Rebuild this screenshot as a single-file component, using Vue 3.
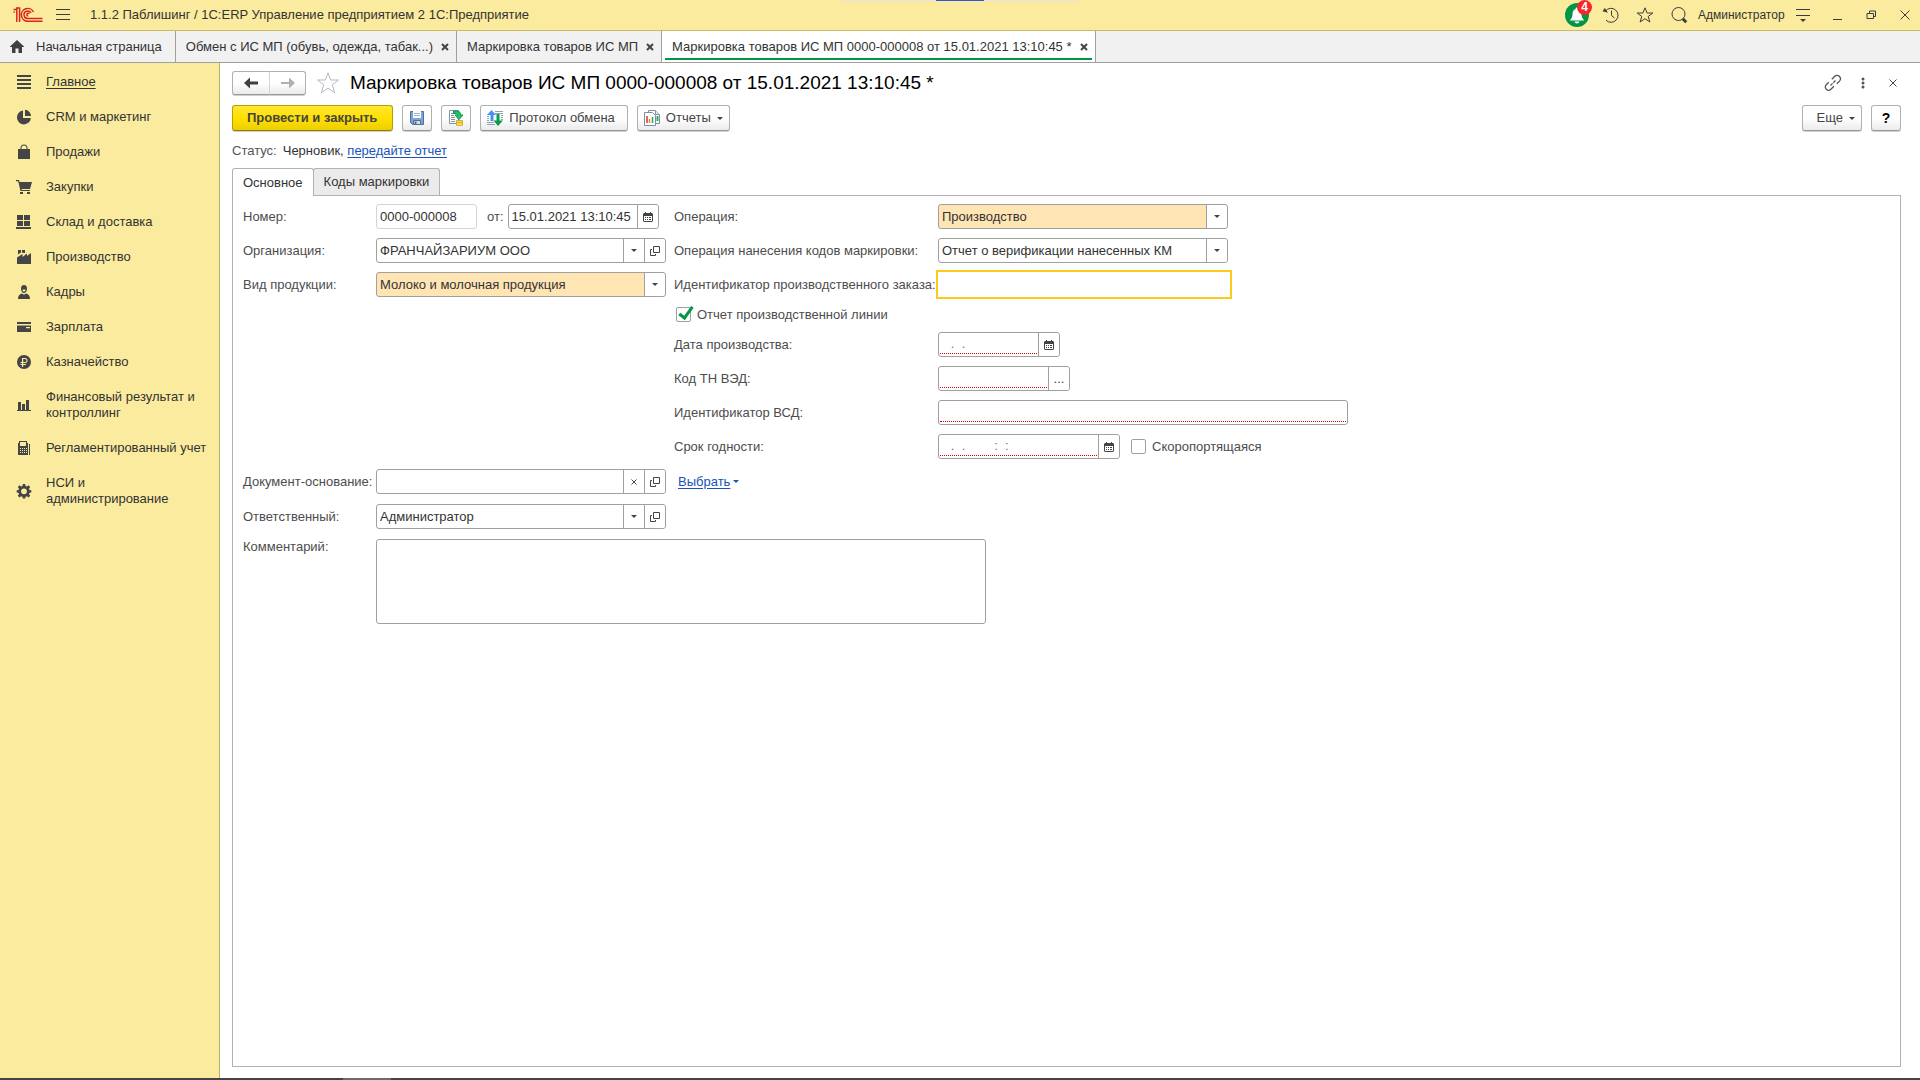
<template>
  <div class="app">
    <header class="topbar">
      <svg class="logo" viewBox="0 0 30 16" width="30" height="16" aria-label="1С">
        <g fill="none" stroke="#d9261c" stroke-width="1.5">
          <path d="M0.5 2.500H3.800V15M0.500 5H1.800M6.600 15V1H3" />
          <path d="M20.500 5A6.400 6.400 0 1 0 15 14.200H29.500" />
          <path d="M18 6A3.700 3.700 0 1 0 15 11.400H29.500" />
          <path d="M16.400 6.800A1.400 1.400 0 1 0 15.200 9" />
        </g>
      </svg>
      <button class="top-btn burger" aria-label="Меню">
        <svg viewBox="0 0 16 16" width="16" height="16"><path d="M1 2.500h14M1 7.500h14M1 12.500h14" /></svg>
      </button>
      <div class="app-title">1.1.2 Паблишинг / 1С:ERP Управление предприятием 2 1С:Предприятие</div>

      <div class="top-actions">
        <button class="top-btn bell" aria-label="Уведомления">
          <svg viewBox="0 0 24 24" width="24" height="24">
            <circle cx="12" cy="12" r="12" fill="#009646" stroke="none" />
            <path class="bell-body" d="M12 4.500c-1 0-1.500.7-1.500 1.500C8 7 7.600 9 7.500 11.500 7.400 14 6.500 15.500 4.800 17.500h14.400c-1.700-2-2.600-3.500-2.700-6C16.400 9 16 7 13.500 6c0-.8-.5-1.500-1.500-1.500zM9.500 18.500h5c-.5 1.300-1.300 2-2.500 2s-2-.7-2.500-2z" />
          </svg>
          <span class="badge">4</span>
        </button>
        <button class="top-btn" aria-label="История">
          <svg viewBox="0 0 18 18" width="18" height="18">
            <path d="M3.500 5A7 7 0 1 1 4 14.200M9.500 4.500V9.500l3 2.500" />
            <path class="solid" d="M0.500 5.200 6 6.800 2.800 2z" />
          </svg>
        </button>
        <button class="top-btn" aria-label="Избранное">
          <svg viewBox="0 0 18 18" width="18" height="18">
            <path d="M9 1.800 11.100 7H16.800L12.200 10.500 13.900 16 9 12.700 4.100 16 5.800 10.500 1.200 7H6.900z" />
          </svg>
        </button>
        <button class="top-btn" aria-label="Поиск">
          <svg viewBox="0 0 18 18" width="18" height="18">
            <circle cx="8.500" cy="8" r="6.500" />
            <path class="thick" d="m12.800 12.800 3.400 3.400" />
          </svg>
        </button>
        <div class="user">Администратор</div>
        <button class="top-btn" aria-label="Настройки">
          <svg viewBox="0 0 16 16" width="16" height="16">
            <path d="M1 2.500h14M1 8.500h14" />
            <path class="solid" d="M5 12h6l-3 3z" />
          </svg>
        </button>
        <button class="top-btn" aria-label="Свернуть">
          <svg viewBox="0 0 16 16" width="16" height="16"><path d="M4 12.500h9" /></svg>
        </button>
        <button class="top-btn" aria-label="Восстановить">
          <svg viewBox="0 0 16 16" width="16" height="16"><path d="M4 6.500h6.500v5H4zM6.500 6V4h6v5.500H11" /></svg>
        </button>
        <button class="top-btn" aria-label="Закрыть">
          <svg viewBox="0 0 16 16" width="16" height="16"><path d="m3.500 3.500 9 9M12.500 3.500l-9 9" /></svg>
        </button>
      </div>
      <div class="grip"><span></span></div>
    </header>

    <nav class="windows">
      <button class="window home">
        <svg viewBox="0 0 14 13" width="14" height="13"><path d="M7 0 14 6.500V7H12v6H8.500V8.500h-3V13H2V7H0v-.5z" /></svg>
        <span>Начальная страница</span>
      </button>
      <div v-for="tab in windows" :key="tab.title" class="window" :class="{ active: tab.active }">
        <button class="window-title">{{ tab.title }}</button>
        <button class="window-close" aria-label="Закрыть вкладку">
          <svg viewBox="0 0 8 8" width="8" height="8"><path d="m1 1 6 6M7 1 1 7" /></svg>
        </button>
      </div>
    </nav>

    <div class="body">
      <aside class="sidebar">
        <a v-for="item in sections" :key="item.title" href="#" class="section" :class="{ current: item.current }">
          <svg viewBox="0 0 16 16" width="16" height="16"><path fill-rule="evenodd" :d="item.icon" /></svg>
          <span>{{ item.title }}</span>
        </a>
      </aside>

      <main class="main">
        <div class="head">
          <div class="history">
            <button class="btn" aria-label="Назад">
              <svg viewBox="0 0 14 12" width="14" height="12"><path fill="#404040" d="M0 6 6 .5V4.500h8v3H6v4z" /></svg>
            </button>
            <button class="btn" aria-label="Вперед">
              <svg viewBox="0 0 14 12" width="14" height="12"><path fill="#b0b0b0" d="M14 6 8 .5V5H0v2h8v4.500z" /></svg>
            </button>
          </div>
          <button class="plain star" aria-label="В избранное">
            <svg viewBox="0 0 24 24" width="24" height="24">
              <path fill="none" stroke="#b4b9c2" d="M12 1.800 14.700 9H22.500L16.300 13.700 18.600 21.800 12 17 5.400 21.800 7.700 13.700 1.500 9H9.300z" />
            </svg>
          </button>
          <h1>Маркировка товаров ИС МП 0000-000008 от 15.01.2021 13:10:45 *</h1>
          <div class="head-tools">
            <button class="plain" aria-label="Получить ссылку">
              <svg viewBox="0 0 18 18" width="18" height="18">
                <g fill="none" stroke="#555" stroke-width="1.300">
                  <path d="M7.800 5.200 10.500 2.500a3.200 3.200 0 0 1 5 0c1.300 1.500 1.200 3.300 0 4.600L12.800 9.800" />
                  <path d="M4.800 8.200 2.300 10.700a3.200 3.200 0 0 0 0 4.600c1.500 1.300 3.300 1.300 4.600 0l3-3" />
                  <path d="m6.500 11.500 5-5" stroke-dasharray="3 1" />
                </g>
              </svg>
            </button>
            <button class="plain" aria-label="Дополнительно">
              <svg viewBox="0 0 4 12" width="4" height="12" fill="#555"><circle cx="2" cy="2" r="1.500" /><circle cx="2" cy="6" r="1.500" /><circle cx="2" cy="10" r="1.500" /></svg>
            </button>
            <button class="plain" aria-label="Закрыть форму">
              <svg viewBox="0 0 8 8" width="8" height="8"><path stroke="#444" d="m.5.5 7 7M7.500.5l-7 7" /></svg>
            </button>
          </div>
        </div>

        <div class="toolbar">
          <button class="btn primary">Провести и закрыть</button>
          <button class="btn icon-only" aria-label="Записать">
            <svg viewBox="0 0 16 16" width="16" height="16">
              <path fill="#7ba5d6" stroke="#4a719f" d="M1.500 1.500h13v13h-11l-2-2z" />
              <path fill="#fff" d="M4 1h8v7H4z" />
              <path stroke="#9fb4cc" d="M5 3.500h6M5 5.500h6" />
              <path fill="#d7dde4" stroke="#54708f" d="M4.500 10.500h7v4h-7z" />
              <path fill="#4a719f" d="M5.500 11.500h2v3h-2z" />
            </svg>
          </button>
          <button class="btn icon-only" aria-label="Провести">
            <svg viewBox="0 0 16 16" width="16" height="16">
              <path fill="#fff" stroke="#8192a3" d="M1.500.5h9v13h-9z" />
              <path stroke="#8192a3" d="M3 3.500h3M3 5.500h3M3 7.500h4M3 9.500h4M3 11.500h4" />
              <path fill="#1fc46a" stroke="#0b9a4a" d="M5.500 1h3.500c2.500 0 3.500 1.500 3.500 4h2.500L11 9.500 7 5h2.500C9.500 4 9 3.500 8 3.500H5.500z" />
              <path fill="#f9dd66" stroke="#d9a927" d="M8.500 10.500h6v4.800h-6z" />
              <path stroke="#d9a927" d="M8.500 12.500h6" />
            </svg>
          </button>
          <button class="btn">
            <svg viewBox="0 0 16 16" width="16" height="16">
              <path stroke="#8fa3b5" d="M0 6.500h2M0 8.500h2M0 10.500h2M0 12.500h7M0 14.500h8M8 1.500h8M8 3.500h8M14 5.500h2M14 7.500h2M14 9.500h2" />
              <path fill="#4a90f0" d="M4.500 0 9 5H6.500v6h-3V5H0z" />
              <path fill="#0b9a4a" d="M9.500 4h3v6.500H16L11 16 6.500 10.500h3z" />
            </svg>
            Протокол обмена
          </button>
          <button class="btn">
            <svg viewBox="0 0 16 16" width="16" height="16">
              <path fill="#fff" stroke="#7c8fa3" d="M4.500.5h7l4 4v9h-11z" />
              <path fill="#e4e9ee" stroke="#7c8fa3" d="M11.500.5v4h4" />
              <path stroke="#2fa84f" stroke-width="2" d="M13.500 6v5" />
              <path fill="#fff" stroke="#7c8fa3" d="M.5 2.500h8l3 3v10H.5z" />
              <path stroke="#d8322a" stroke-width="1.500" d="M3 6v7" />
              <path stroke="#e08a2a" stroke-width="1.500" d="M5.500 9v4" />
              <path stroke="#2fa84f" stroke-width="1.500" d="M8.500 7v6" />
            </svg>
            Отчеты
            <i class="caret"></i>
          </button>
          <button class="btn more">Еще <i class="caret"></i></button>
          <button class="btn icon-only help">?</button>
        </div>

        <div class="status">
          <span class="muted">Статус:</span>
          <span>Черновик, <a href="#">передайте отчет</a></span>
        </div>

        <div class="tabs" role="tablist">
          <button class="tab active" role="tab" aria-selected="true">Основное</button>
          <button class="tab" role="tab" aria-selected="false">Коды маркировки</button>
        </div>

        <form class="panel" @submit.prevent>
          <div class="columns">
            <div class="col left">
              <div class="row">
                <label for="number">Номер:</label>
                <div class="field readonly number"><input id="number" v-model="doc.number" type="text" readonly></div>
                <label for="date" class="from">от:</label>
                <div class="field date-time">
                  <input id="date" v-model="doc.date" type="text">
                  <button type="button" class="cell" aria-label="Календарь"><svg viewBox="0 0 10 10" width="10" height="10"><path :d="icons.calendar" fill-rule="evenodd" /></svg></button>
                </div>
              </div>
              <div class="row">
                <label for="org">Организация:</label>
                <div class="field wide">
                  <input id="org" v-model="doc.org" type="text">
                  <button type="button" class="cell" aria-label="Выбрать"><i class="caret"></i></button>
                  <button type="button" class="cell" aria-label="Открыть"><svg viewBox="0 0 10 10" width="10" height="10"><path class="line" :d="icons.open" /></svg></button>
                </div>
              </div>
              <div class="row">
                <label for="kind">Вид продукции:</label>
                <div class="field wide marked">
                  <select id="kind" v-model="doc.kind"><option>Молоко и молочная продукция</option></select>
                  <span class="cell"><i class="caret"></i></span>
                </div>
              </div>
            </div>

            <div class="col right">
              <div class="row">
                <label for="operation">Операция:</label>
                <div class="field wide marked">
                  <select id="operation" v-model="doc.operation"><option>Производство</option></select>
                  <span class="cell"><i class="caret"></i></span>
                </div>
              </div>
              <div class="row">
                <label for="marking">Операция нанесения кодов маркировки:</label>
                <div class="field wide">
                  <select id="marking" v-model="doc.marking"><option>Отчет о верификации нанесенных КМ</option></select>
                  <span class="cell"><i class="caret"></i></span>
                </div>
              </div>
              <div class="row">
                <label for="order">Идентификатор производственного заказа:</label>
                <div class="field wide focused"><input id="order" v-model="doc.order" type="text"></div>
              </div>
              <label class="check">
                <input v-model="doc.lineReport" type="checkbox">
                Отчет производственной линии
              </label>
              <div class="row">
                <label for="made">Дата производства:</label>
                <div class="field required date">
                  <input id="made" v-model="doc.made" type="text">
                  <button type="button" class="cell" aria-label="Календарь"><svg viewBox="0 0 10 10" width="10" height="10"><path :d="icons.calendar" fill-rule="evenodd" /></svg></button>
                </div>
              </div>
              <div class="row">
                <label for="tnved">Код ТН ВЭД:</label>
                <div class="field required code">
                  <input id="tnved" v-model="doc.tnved" type="text">
                  <button type="button" class="cell">...</button>
                </div>
              </div>
              <div class="row">
                <label for="vsd">Идентификатор ВСД:</label>
                <div class="field required vsd"><input id="vsd" v-model="doc.vsd" type="text"></div>
              </div>
              <div class="row">
                <label for="expires">Срок годности:</label>
                <div class="field required expires">
                  <input id="expires" v-model="doc.expires" type="text">
                  <button type="button" class="cell" aria-label="Календарь"><svg viewBox="0 0 10 10" width="10" height="10"><path :d="icons.calendar" fill-rule="evenodd" /></svg></button>
                </div>
                <label class="check perishable">
                  <input v-model="doc.perishable" type="checkbox">
                  Скоропортящаяся
                </label>
              </div>
            </div>
          </div>

          <div class="col left bottom">
            <div class="row">
              <label for="base">Документ-основание:</label>
              <div class="field wide">
                <input id="base" v-model="doc.base" type="text">
                <button type="button" class="cell" aria-label="Очистить"><svg viewBox="0 0 10 10" width="10" height="10"><path class="line" d="m2.500 2.500 5 5M7.500 2.500l-5 5" /></svg></button>
                <button type="button" class="cell" aria-label="Открыть"><svg viewBox="0 0 10 10" width="10" height="10"><path class="line" :d="icons.open" /></svg></button>
              </div>
              <a href="#" class="pick"><span>Выбрать</span><i class="caret"></i></a>
            </div>
            <div class="row">
              <label for="owner">Ответственный:</label>
              <div class="field wide">
                <input id="owner" v-model="doc.owner" type="text">
                <button type="button" class="cell" aria-label="Выбрать"><i class="caret"></i></button>
                <button type="button" class="cell" aria-label="Открыть"><svg viewBox="0 0 10 10" width="10" height="10"><path class="line" :d="icons.open" /></svg></button>
              </div>
            </div>
            <div class="row top">
              <label for="comment">Комментарий:</label>
              <textarea id="comment" v-model="doc.comment"></textarea>
            </div>
          </div>
        </form>
      </main>
    </div>

    <footer class="taskbar"><span></span></footer>
  </div>
</template>

<script setup>
import { reactive } from 'vue'

const windows = [
  { title: 'Обмен с ИС МП (обувь, одежда, табак...)' },
  { title: 'Маркировка товаров ИС МП' },
  { title: 'Маркировка товаров ИС МП 0000-000008 от 15.01.2021 13:10:45 *', active: true }
]

const sections = [
  { title: 'Главное', current: true, icon: 'M1 1h14v2H1zM1 5h14v2H1zM1 9h14v2H1zM1 13h14v2H1z' },
  { title: 'CRM и маркетинг', icon: 'M7 1.500V9h7.900A7 7 0 1 1 7 1.500zM9 .8A6.300 6.300 0 0 1 15 7H9z' },
  { title: 'Продажи', icon: 'M2 5h2.500V4a3.500 3.500 0 0 1 7 0v1H14v10H2zM5.500 5h5V4a2.500 2.500 0 0 0-5 0z' },
  { title: 'Закупки', icon: 'M0 1h3l.6 2H16l-2 7H5.500l.4 1H14v1H4.500L2.200 2.300H0zM4 13h3v2H4zM11 13h3v2h-3z' },
  { title: 'Склад и доставка', icon: 'M1 1h6v5H1zM8 1h6v5H8zM1 7h6v5H1zM8 7h6v5H8zM0 13h15v2H0z' },
  { title: 'Производство', icon: 'M1 15V8.500L6.500 5v3L11 4.500V7l4-3v11zM2 1h3v2.500L2 5.500zM6 1h3v3L7.500 4 6 3.500z' },
  { title: 'Кадры', icon: 'M5 4.500C5 2.300 6 1 8 1s3 1.300 3 3.500C11 7 9.800 9 8 9S5 7 5 4.500zM6.500 5.500C6.500 6.800 7.200 7.800 8 7.800s1.500-1 1.500-2.300zM2 15C2 12 3 10.500 6 9.500l2 1.300 2-1.300c3 1 4 2.500 4 5.500z' },
  { title: 'Зарплата', icon: 'M1 3h14v2H1zM1 6.500h14V13H1zM10 8v1.200h4V8z' },
  { title: 'Казначейство', icon: 'M8 1a7 7 0 1 1 0 14A7 7 0 0 1 8 1zM6 4v4H4.500v1H6v1H4.500v1H6v2h1.200v-2H10v-1H7.200V9H9a2.500 2.500 0 0 0 0-5zM7.200 5H9a1.500 1.500 0 0 1 0 3H7.200z' },
  { title: 'Финансовый результат и контроллинг', icon: 'M2 5h3v8H2zM6 7h3v6H6zM10 3h3v10h-3zM1 13h14v1H1z' },
  { title: 'Регламентированный учет', icon: 'M3 1h8v2h1v12H2V3h1zM4 2v4h6V2zM4 8v1h1V8zM6 8v1h1V8zM8 8v1h1V8zM10 8v1h1V8zM4 10v1h1v-1zM6 10v1h1v-1zM8 10v1h1v-1zM10 10v1h1v-1zM4 12v1h1v-1zM6 12v1h1v-1zM8 12v1h1v-1zM10 12v1h1v-1zM13 4h1v11h-1z' },
  { title: 'НСИ и администрирование', icon: 'M6.800 1h2.400l.4 2 1.200.5 1.700-1.200 1.700 1.700L13 5.700l.5 1.200 1.800.3v2.200l-1.800.4-.5 1.200 1.200 1.700-1.700 1.700-1.700-1.200-1.200.5-.4 1.800H6.800l-.4-1.800-1.200-.5-1.700 1.200-1.700-1.700L3 11l-.5-1.200-1.800-.4V7.200l1.800-.3L3 5.700 1.800 4l1.700-1.700 1.700 1.200L6.400 3zM8 5.400a2.900 2.900 0 1 0 0 5.800 2.900 2.900 0 0 0 0-5.800z' }
]

const icons = {
  calendar: 'M1 1h1V0h1v1h4V0h1v1h1l1 1v7l-1 1H1L0 9V2zM1 4v5h8V4zM2 5h1v1H2zM4 5h1v1H4zM6 5h2v1H6zM2 7h1v1H2zM4 7h1v1H4zM6 7h2v1H6z',
  open: 'M3.500.5h6v6h-6zM2 3.500H.5v6h5V8'
}

const doc = reactive({
  number: '0000-000008',
  date: '15.01.2021 13:10:45',
  org: 'ФРАНЧАЙЗАРИУМ ООО',
  kind: 'Молоко и молочная продукция',
  operation: 'Производство',
  marking: 'Отчет о верификации нанесенных КМ',
  order: '',
  lineReport: true,
  made: '   .  .    ',
  tnved: '',
  vsd: '',
  expires: '   .  .        :  :',
  perishable: false,
  base: '',
  owner: 'Администратор',
  comment: ''
})
</script>

<style>
body {
  margin: 0;
}
</style>

<style scoped>
.app {
  display: flex;
  flex-direction: column;
  min-height: 100vh;
  background: #fff;
  color: #333;
  font-family: "Liberation Sans", Arial, sans-serif;
  font-size: 13px;
  line-height: 16px;
}

.app *,
.app {
  box-sizing: border-box;
}

button,
input,
select,
textarea {
  margin: 0;
  padding: 0;
  border: 0;
  background: none;
  color: inherit;
  font: inherit;
}

svg {
  display: block;
  flex: none;
}

/* top bar */
.topbar {
  position: relative;
  display: flex;
  align-items: center;
  height: 31px;
  padding-left: 13px;
  background: #fbeb9e;
  border-bottom: 1px solid #c9bb66;
}

.top-btn {
  position: relative;
  display: flex;
  align-items: center;
  justify-content: center;
  width: 30px;
  height: 30px;
}

.top-btn svg {
  fill: none;
  stroke: #3c3c3c;
}

.top-btn .solid {
  fill: #3c3c3c;
  stroke: none;
}

.top-btn .thick {
  stroke-width: 3;
}

.top-btn .bell-body {
  fill: #fff;
  stroke: none;
}

.burger {
  margin-left: 5px;
}

.app-title {
  margin-left: 12px;
}

.top-actions {
  display: flex;
  align-items: center;
  gap: 4px;
  margin-left: auto;
}

.badge {
  position: absolute;
  top: 0;
  right: 0;
  width: 15px;
  height: 15px;
  border-radius: 50%;
  background: #f8252c;
  color: #fff;
  font-size: 12px;
  font-weight: bold;
  line-height: 15px;
  text-align: center;
}

.user {
  width: 86px;
  font-size: 12px;
  text-align: center;
}

.grip {
  position: absolute;
  top: 0;
  left: 50%;
  width: 240px;
  height: 1px;
  margin-left: -120px;
  background: #e4e4e4;
}

.grip span {
  display: block;
  width: 48px;
  height: 1px;
  margin: 0 auto;
  background: #2b57d4;
}

/* open windows */
.windows {
  display: flex;
  height: 32px;
  background: #f1f1f1;
  border-bottom: 1px solid #a0a0a0;
}

.window {
  display: flex;
  align-items: center;
  gap: 8px;
  padding: 0 7px 0 10px;
  border-right: 1px solid #a0a0a0;
}

.home {
  gap: 12px;
  padding: 0 13px 0 10px;
}

.window.active {
  background: linear-gradient(#009646, #009646) 3px 27px / calc(100% - 6px) 2px no-repeat #fff;
}

.window-close svg {
  stroke: #444;
  stroke-width: 2;
}

.home svg {
  fill: #404040;
}

/* sections */
.body {
  display: flex;
  flex: 1;
}

.sidebar {
  display: flex;
  flex: none;
  flex-direction: column;
  gap: 19px;
  width: 220px;
  padding: 11px 12px 11px 16px;
  background: #fbeb9e;
  border-right: 1px solid #bdae62;
}

.section {
  display: flex;
  align-items: center;
  gap: 14px;
  color: #333;
  text-decoration: none;
}

.section svg {
  fill: #454545;
}

.section.current span {
  text-decoration: underline;
  text-underline-offset: 2px;
}

/* document form */
.main {
  display: flex;
  flex: 1;
  flex-direction: column;
  min-width: 0;
  padding: 8px 19px 11px 12px;
}

.head {
  display: flex;
  align-items: center;
  height: 24px;
  margin-right: -7px;
}

.btn {
  display: flex;
  align-items: center;
  justify-content: center;
  gap: 6px;
  height: 26px;
  padding: 0 12px 0 6px;
  border: 1px solid #b0b0b0;
  border-bottom-color: #989898;
  border-radius: 3px;
  background: linear-gradient(#fff 50%, #ebebeb);
  box-shadow: 0 1px 0 #d0d0d0;
  color: #444;
}

.history {
  display: flex;
}

.history .btn {
  width: 38px;
  height: 24px;
  padding: 0;
  border-radius: 3px 0 0 3px;
}

.history .btn + .btn {
  width: 37px;
  margin-left: -1px;
  border-left-color: #d4d4d4;
  border-radius: 0 3px 3px 0;
}

.plain {
  display: flex;
  align-items: center;
  justify-content: center;
  width: 30px;
  height: 24px;
}

.star {
  width: 24px;
  margin: 0 10px;
}

h1 {
  margin: 0;
  color: #000;
  font-size: 19px;
  font-weight: normal;
  line-height: 24px;
}

.head-tools {
  display: flex;
  margin-left: auto;
}

.toolbar {
  display: flex;
  gap: 9px;
  margin-top: 10px;
}

.primary {
  padding: 0 15px 0 14px;
  border-color: #b8a200;
  border-bottom-color: #8f7e00;
  background: linear-gradient(#ffe834, #ffe000 50%, #edcf00);
  font-weight: bold;
}

.icon-only {
  width: 30px;
  padding: 0;
}

.more {
  margin-left: auto;
  padding: 0 6px 0 14px;
}

.help {
  color: #000;
  font-weight: bold;
  font-size: 14px;
}

.caret {
  width: 0;
  border: 3px solid transparent;
  border-top-color: currentColor;
  border-bottom: 0;
}

.toolbar .btn:has(.caret) {
  padding-right: 6px;
}

.status {
  display: flex;
  gap: 6px;
  margin: 12px 0 9px;
}

.muted {
  color: #555;
}

.status a,
.pick {
  color: #1a53b8;
  text-underline-offset: 2px;
}

.tabs {
  display: flex;
  height: 27px;
}

.tab {
  height: 27px;
  padding: 0 10px;
  border: 1px solid #b2b2b2;
  border-bottom: 0;
  border-radius: 3px 3px 0 0;
  background: #ebebeb;
}

.tab + .tab {
  margin-left: -1px;
}

.tab.active {
  position: relative;
  height: 28px;
  background: #fff;
}

.panel {
  display: flex;
  flex: 1;
  flex-direction: column;
  gap: 10px;
  padding: 8px 10px;
  border: 1px solid #b2b2b2;
}

.columns {
  display: flex;
  gap: 8px;
}

.col {
  display: flex;
  flex-direction: column;
  gap: 9px;
}

.bottom {
  gap: 10px;
}

.row {
  display: flex;
  align-items: center;
}

.row.top {
  align-items: flex-start;
}

label {
  color: #4d4d4d;
  white-space: nowrap;
}

.left .row > label:first-child {
  width: 133px;
}

.right .row > label:first-child {
  width: 264px;
}

.row .from {
  margin: 0 4px 0 10px;
}

.field {
  display: flex;
  height: 25px;
  border: 1px solid #a0a0a0;
  border-radius: 3px;
  background: #fff;
}

.field input,
.field select {
  flex: 1;
  min-width: 0;
  padding: 0 3px;
  outline: 0;
  appearance: none;
}

.cell {
  display: flex;
  align-items: center;
  justify-content: center;
  width: 21px;
  border-left: 1px solid #a0a0a0;
  background: #fff;
  color: #444;
}

.cell:last-child {
  border-radius: 0 3px 3px 0;
}

.cell svg {
  fill: #444;
}

.cell .line {
  fill: none;
  stroke: #444;
}

.wide {
  width: 290px;
}

.number {
  width: 101px;
}

.date-time {
  width: 151px;
}

.date {
  width: 122px;
}

.code {
  width: 132px;
}

.vsd {
  width: 410px;
}

.expires {
  width: 182px;
}

.readonly {
  border-color: #d4d4d4;
}

.marked {
  background: #ffe5b3;
}

/* the frame stands outside the field, right up to its label */
.focused {
  width: 292px;
  border-color: #fff;
  border-radius: 0;
  box-shadow: 0 0 0 2px #fbcb1c;
}

.required input {
  margin: 0 1px 2px;
  padding: 2px 0 0;
  border-bottom: 1px dotted #d40000;
  color: #777;
}

.check {
  display: flex;
  align-items: center;
  gap: 6px;
  height: 17px;
}

.check input {
  width: 15px;
  height: 15px;
  margin-left: 2px;
  border: 1px solid #a0a0a0;
  border-radius: 2px;
  background: #fff;
  appearance: none;
}

/* the tick reaches over the corner of its box */
.check input:checked::before {
  content: "";
  display: block;
  width: 5px;
  height: 12px;
  margin: -4px 0 0 5px;
  border: solid #009646;
  border-width: 0 3px 3px 0;
  transform: rotate(36deg);
}

.perishable {
  margin-left: 9px;
}

.pick {
  display: flex;
  align-items: center;
  gap: 3px;
  margin-left: 12px;
  text-decoration: none;
}

.pick span {
  text-decoration: underline;
}

textarea {
  width: 610px;
  height: 85px;
  padding: 3px;
  border: 1px solid #a0a0a0;
  border-radius: 3px;
  resize: none;
}

/* edge of the system taskbar */
.taskbar {
  height: 2px;
  padding-left: 343px;
  background: #444;
}

.taskbar span {
  display: block;
  width: 48px;
  height: 2px;
  background: #6c6c6c;
}
</style>
